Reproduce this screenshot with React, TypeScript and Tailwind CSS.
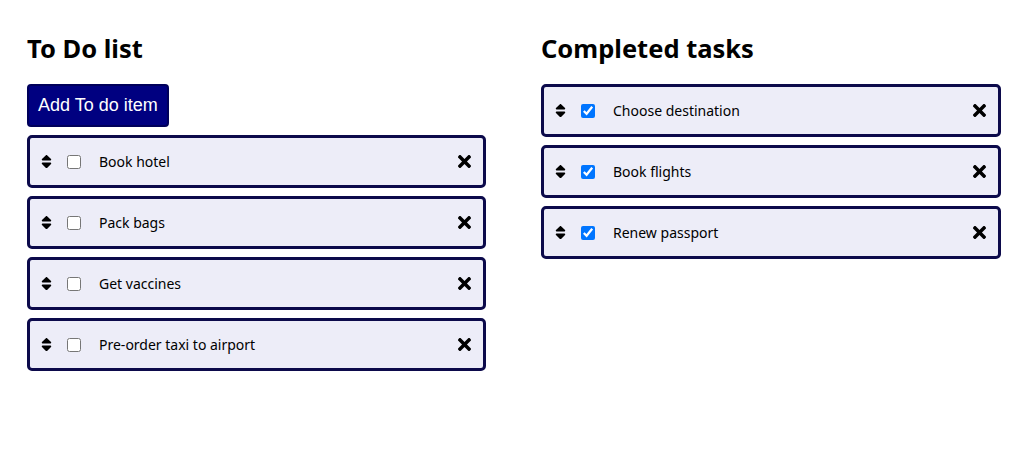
import { FaSort, FaTimes } from "react-icons/fa";

const todoList = ["Book hotel", "Pack bags", "Get vaccines", "Pre-order taxi to airport"];
const doneList = ["Choose destination", "Book flights", "Renew passport"];

function TaskItem({ name, done }: { name: string; done: boolean }) {
  return (
    <div className="flex items-center h-[53px] border-[3px] border-[#0c0a4b] rounded-[5px] bg-[#ededf8] pl-[8px] pr-[9px]">
      <FaSort className="text-[17px] text-black shrink-0" />
      <input
        type="checkbox"
        checked={done}
        readOnly
        className="w-[14px] h-[14px] ml-[12px] mr-[18px] shrink-0"
      />
      <p className="flex-1 text-[14px] text-black">{name}</p>
      <FaTimes className="text-[19px] text-black shrink-0" />
    </div>
  );
}

export default function App() {
  return (
    <div
      className="w-full min-h-screen bg-white pl-[27px] pt-[31px] flex gap-[55px]"
      style={{ fontFamily: '"Noto Sans", "Open Sans", sans-serif' }}
    >
      <div className="w-[459px] shrink-0">
        <h1 className="text-[25.5px] font-bold h-[35px] leading-[35px] mb-[18px] text-black">To Do list</h1>
        <button className="h-[43px] px-[9px] rounded-[4px] border-2 border-[#00005a] bg-[#000080] text-white text-[18px] font-['Liberation_Sans',sans-serif] cursor-pointer">
          Add To do item
        </button>
        <div className="mt-[8px] flex flex-col gap-[8px]">
          {todoList.map((item) => (
            <TaskItem key={item} name={item} done={false} />
          ))}
        </div>
      </div>
      <div className="w-[460px] shrink-0">
        <h1 className="text-[25.5px] font-bold h-[35px] leading-[35px] mb-[18px] text-black">Completed tasks</h1>
        <div className="flex flex-col gap-[8px]">
          {doneList.map((item) => (
            <TaskItem key={item} name={item} done={true} />
          ))}
        </div>
      </div>
    </div>
  );
}
